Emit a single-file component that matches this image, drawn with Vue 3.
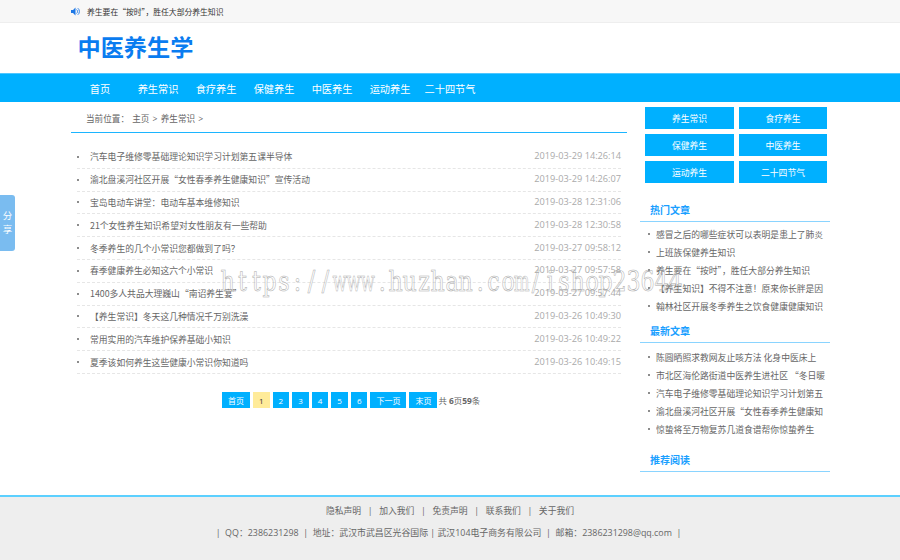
<script setup>
const navs = ['养生常识', '食疗养生', '保健养生', '中医养生', '运动养生', '二十四节气']
const list = [
  ['汽车电子维修零基础理论知识学习计划第五课半导体', '2019-03-29 14:26:14'],
  ['渝北盘溪河社区开展“女性春季养生健康知识”宣传活动', '2019-03-29 14:26:07'],
  ['宝岛电动车讲堂：电动车基本维修知识', '2019-03-28 12:31:06'],
  ['21个女性养生知识希望对女性朋友有一些帮助', '2019-03-28 12:30:58'],
  ['冬季养生的几个小常识您都做到了吗？', '2019-03-27 09:58:12'],
  ['春季健康养生必知这六个小常识', '2019-03-27 09:57:58'],
  ['1400多人共品大理巍山“南诏养生宴”', '2019-03-27 09:57:44'],
  ['【养生常识】冬天这几种情况千万别洗澡', '2019-03-26 10:49:30'],
  ['常用实用的汽车维护保养基础小知识', '2019-03-26 10:49:22'],
  ['夏季该如何养生这些健康小常识你知道吗', '2019-03-26 10:49:15'],
]
const hot = ['感冒之后的哪些症状可以表明是患上了肺炎', '上班族保健养生知识', '养生要在“按时”，胜任大部分养生知识', '【养生知识】不得不注意！原来你长胖是因', '翰林社区开展冬季养生之饮食健康健康知识']
const latest = ['陈圆晒照求教网友止咳方法 化身中医床上', '市北区海伦路街道中医养生进社区 “冬日暖', '汽车电子维修零基础理论知识学习计划第五', '渝北盘溪河社区开展“女性春季养生健康知', '惊蛰将至万物复苏几道食谱帮你惊蛰养生']
const markChars = 'https://www.huzhan.com/ishop23644'.split('').map((c) => ({ c, wide: c === 'w' || c === 'm' }))
</script>

<template>
  <div class="page">
    <div class="topbar">
      <div class="wrap topbar-in">
        <svg class="spk" width="9" height="9" viewBox="0 0 9 9"><path d="M0 3h2l2.500-2.500v8L2 6H0z" fill="#1e78e6"/><path d="M5.500 2.500a2.500 2.500 0 0 1 0 4M6.800 1.200a4.200 4.200 0 0 1 0 6.600" fill="none" stroke="#1e78e6" stroke-width=".9"/></svg>
        <span>养生要在“按时”，胜任大部分养生知识</span>
      </div>
    </div>
    <div class="head"><div class="wrap"><div class="logo">中医养生学</div></div></div>
    <div class="nav">
      <div class="wrap nav-in">
        <span class="home">首页</span>
        <span v-for="n in navs" :key="n" class="nav-item">{{ n }}</span>
      </div>
    </div>
    <div class="wrap body">
      <div class="main">
        <div class="crumb">当前位置： 主页 &gt; 养生常识 &gt;</div>
        <ul class="list">
          <li v-for="r in list" :key="r[1]">
            <span class="dot"></span>
            <span class="t">{{ r[0] }}</span>
            <span class="d">{{ r[1] }}</span>
          </li>
        </ul>
        <div class="pager">
          <a>首页</a><a class="cur">1</a><a>2</a><a>3</a><a>4</a><a>5</a><a>6</a><a>下一页</a><a class="last">末页</a>
          <span class="tot">共 <b>6</b>页<b>59</b>条</span>
        </div>
      </div>
      <div class="side">
        <div class="cats">
          <a v-for="n in navs" :key="n">{{ n }}</a>
        </div>
        <h3 class="h-hot">热门文章</h3>
        <ul class="slist">
          <li v-for="s in hot" :key="s"><span class="dot"></span><span class="s">{{ s }}</span></li>
        </ul>
        <h3 class="h-new">最新文章</h3>
        <ul class="slist slist-new">
          <li v-for="s in latest" :key="s"><span class="dot"></span><span class="s">{{ s }}</span></li>
        </ul>
        <h3 class="h-rec">推荐阅读</h3>
      </div>
    </div>
    <div class="foot">
      <div class="f1">
        <span>隐私声明</span><i>|</i><span>加入我们</span><i>|</i><span>免责声明</span><i>|</i><span>联系我们</span><i>|</i><span>关于我们</span>
      </div>
      <div class="f2">|&nbsp; QQ：2386231298 &nbsp;|&nbsp; 地址：武汉市武昌区光谷国际 | 武汉104电子商务有限公司 &nbsp;|&nbsp; 邮箱：2386231298@qq.com &nbsp;|</div>
    </div>
    <div class="share">分<br>享</div>
    <div class="mark"><span v-for="(m, i) in markChars" :key="i" class="mc"><span :class="m.wide ? 'g wide' : 'g'">{{ m.c }}</span></span></div>
  </div>
</template>

<style>
html, body { margin: 0; padding: 0; background: #fff; }
</style>

<style scoped>
.page { position: relative; width: 900px; height: 560px; overflow: hidden; font-family: "Open Sans", "Noto Sans CJK SC", sans-serif; color: #666; display: flex; flex-direction: column; }
.wrap { width: 759px; margin-left: 71px; }
.topbar { height: 22px; background: #f7f7f7; border-bottom: 1px solid #eee; flex: none; }
.topbar-in { display: flex; align-items: center; height: 22px; font-size: 7.800px; color: #333; gap: 7px; font-family: "Noto Sans CJK SC", sans-serif; }
.spk { flex: none; }
.head { height: 50px; flex: none; }
.logo { font-size: 23.200px; font-weight: 700; color: #0a7cf0; line-height: 48px; padding-left: 6.500px; }
.nav { height: 28px; background: #00b0ff; border-top: 1px solid #4fc6ff; flex: none; }
.nav-in { display: flex; align-items: center; height: 28px; color: #fff; font-size: 10.200px; }
.home { width: 58px; text-align: center; }
.nav-item { width: 58px; text-align: center; white-space: nowrap; }
.nav-item:last-child { width: 62px; }
.body { display: flex; flex: none; height: 393px; }
.main { width: 556px; flex: none; }
.crumb { height: 30px; line-height: 35px; font-size: 8.600px; word-spacing: 1px; color: #666; padding-left: 15px; border-bottom: 1px solid #1cb5ff; }
.list { list-style: none; margin: 13px 0 0 6px; padding: 0; width: 544px; }
.list li { display: flex; align-items: center; height: 21.800px; border-bottom: 1px dashed #e6e6e6; font-size: 8.800px; }
.dot { width: 2px; height: 2px; background: #666; flex: none; border-radius: 50%; }
.t { margin-left: 11px; flex: 1; color: #666; font-family: "Noto Sans CJK SC", "Open Sans", sans-serif; }
.d { color: #aaa; font-size: 9.200px; margin-top: -2px; }
.pager { display: flex; align-items: center; margin: 18px 0 0 151px; font-size: 8px; height: 16.500px; }
.pager a { background: #00b0ff; color: #fff; padding: 0 6px; height: 16.500px; line-height: 17px; margin-right: 3px; display: block; white-space: nowrap; }
.pager a.cur { background: #ffeb99; color: #333; }
.pager a.last { margin-right: 0; }
.tot { color: #666; margin-left: 1px; font-size: 8.400px; }
.tot b { font-weight: 700; }
.side { width: 190px; margin-left: 13px; flex: none; }
.cats { display: grid; grid-template-columns: 89px 88px; gap: 5px 5px; margin: 5px 0 0 5px; }
.cats a { height: 22px; line-height: 24px; background: #00b0ff; color: #fff; text-align: center; font-size: 8.800px; }
.side h3 { margin: 0; font-size: 10px; font-weight: 700; color: #1a9fff; padding-left: 10px; border-bottom: 1px solid #8ad4ff; height: 24px; line-height: 24px; box-sizing: border-box; }
.side .h-hot { margin-top: 15px; }
.side .h-new { margin-top: 4px; }
.side .h-rec { margin-top: 10px; }
.slist { list-style: none; margin: 3px 0 0; padding: 0 0 0 8px; }
.slist-new { margin-top: 5px; }
.slist li { display: flex; align-items: center; height: 18px; font-size: 8.800px; color: #666; font-family: "Noto Sans CJK SC", sans-serif; }
.s { margin-left: 6px; white-space: nowrap; overflow: hidden; width: 170px; }
.foot { flex: 1; background: #eee; border-top: 2px solid #5cd0ff; text-align: center; font-size: 8.800px; color: #666; }
.f1 { margin-top: 7px; display: flex; justify-content: center; gap: 6.600px; height: 14px; line-height: 14px; }
.f1 i { font-style: normal; }
.f2 { margin-top: 8px; padding-right: 3px; line-height: 14px; font-size: 8.900px; }
.share { position: absolute; left: 0; top: 195px; width: 15px; height: 56px; background: #7abcf0; border-radius: 0 3px 3px 0; color: #fff; font-size: 9.500px; line-height: 14px; text-align: center; padding-top: 14px; box-sizing: border-box; }
.mark { position: absolute; left: 221px; top: 264px; display: flex; font-family: "DejaVu Serif", serif; font-size: 27px; line-height: 36px; color: transparent; -webkit-text-stroke: .55px #aaa; white-space: nowrap; }
.mc { width: 14px; display: flex; justify-content: center; }
.g { display: block; transform: scaleX(.82); }
.g.wide { transform: scaleX(.62); }
</style>
